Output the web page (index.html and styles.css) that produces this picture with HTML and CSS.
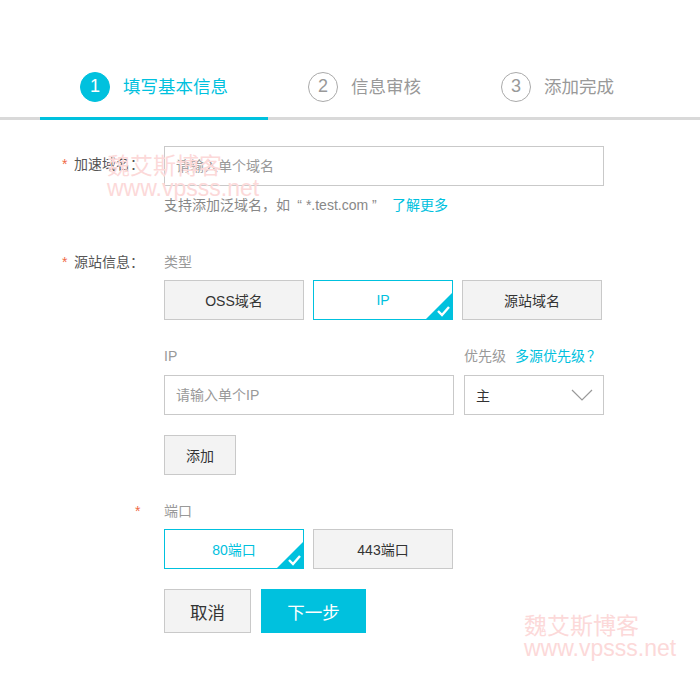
FILE: index.html
```html
<!DOCTYPE html>
<html lang="zh-CN">
<head>
  <meta charset="UTF-8">
  <meta name="viewport" content="width=device-width, initial-scale=1.0">
  <title>添加域名</title>
  <link rel="stylesheet" href="styles.css">
</head>
<body>
  <div class="page">
    <ul class="steps">
      <li class="step active"><span class="step-num">1</span><span class="step-name">填写基本信息</span></li>
      <li class="step"><span class="step-num">2</span><span class="step-name">信息审核</span></li>
      <li class="step"><span class="step-num">3</span><span class="step-name">添加完成</span></li>
    </ul>

    <form class="form">
      <div class="form-row">
        <label class="form-label label-input"><span class="req">*</span>加速域名：</label>
        <div class="form-field">
          <input type="text" class="text-input domain-input" placeholder="请输入单个域名">
          <p class="help">支持添加泛域名，如<span class="q q-open">“</span> *.test.com <span class="q q-close">”</span><a class="link" href="#">了解更多</a></p>
        </div>
      </div>

      <div class="form-row row-origin">
        <label class="form-label"><span class="req">*</span>源站信息：</label>
        <div class="form-field">
          <div class="field-title">类型</div>
          <div class="choice-group">
            <button type="button" class="choice">OSS域名</button>
            <button type="button" class="choice selected">IP
              <svg class="choice-mark" width="26" height="26" viewBox="0 0 26 26">
                <polygon points="26,0 26,26 0,26" fill="#00c1de"/>
                <polyline points="12,18 16,22 23,14" fill="none" stroke="#fff" stroke-width="2.4"/>
              </svg>
            </button>
            <button type="button" class="choice">源站域名</button>
          </div>

          <div class="ip-row">
            <div class="ip-col">
              <div class="field-title sub">IP</div>
              <input type="text" class="text-input ip-input" placeholder="请输入单个IP">
            </div>
            <div class="prio-col">
              <div class="field-title sub prio-title">优先级<a class="link prio-link" href="#">多源优先级<span class="qm">？</span></a></div>
              <div class="select">
                <span>主</span>
                <svg width="22" height="12" viewBox="0 0 22 12">
                  <polyline points="1,1 11,11 21,1" fill="none" stroke="#999" stroke-width="1.2"/>
                </svg>
              </div>
            </div>
          </div>

          <button type="button" class="button add-btn">添加</button>
        </div>
      </div>

      <div class="form-row row-port">
        <label class="form-label port-label"><span class="req">*</span></label>
        <div class="form-field">
          <div class="field-title">端口</div>
          <div class="choice-group">
            <button type="button" class="choice selected">80端口
              <svg class="choice-mark" width="26" height="26" viewBox="0 0 26 26">
                <polygon points="26,0 26,26 0,26" fill="#00c1de"/>
                <polyline points="12,18 16,22 23,14" fill="none" stroke="#fff" stroke-width="2.4"/>
              </svg>
            </button>
            <button type="button" class="choice">443端口</button>
          </div>
          <div class="actions">
            <button type="button" class="button big cancel">取消</button>
            <button type="submit" class="button big primary">下一步</button>
          </div>
        </div>
      </div>
    </form>

    <div class="watermark wm-top">魏艾斯博客<br>www.vpsss.net</div>
    <div class="watermark wm-bottom">魏艾斯博客<br>www.vpsss.net</div>
  </div>
</body>
</html>
```

FILE: styles.css
```css
body {
  margin: 0;
  background: #fff;
  color: #333;
  font-family: "Liberation Sans", "Noto Sans CJK SC", sans-serif;
  font-size: 14px;
}

.page {
  position: relative;
  width: 700px;
  height: 678px;
  overflow: hidden;
}

/* steps */
.steps {
  display: flex;
  margin: 56px 0 0;
  padding: 0 0 0 40px;
  list-style: none;
  border-bottom: 3px solid #d9d9d9;
}

.step {
  display: flex;
  align-items: center;
  gap: 13px;
  height: 64px;
  padding: 0 40px;
  margin-bottom: -3px;
  border-bottom: 3px solid transparent;
  box-sizing: border-box;
  color: #999;
}

.step.active {
  border-bottom-color: #00c1de;
  color: #00c1de;
}

.step-num {
  width: 30px;
  height: 30px;
  border: 1px solid #aaa;
  border-radius: 50%;
  box-sizing: border-box;
  display: flex;
  align-items: center;
  justify-content: center;
  font-size: 18px;
  color: #999;
}

.step.active .step-num {
  background: #00c1de;
  border-color: #00c1de;
  color: #fff;
}

.step-name {
  font-size: 17.5px;
  line-height: 24px;
}

/* form */
.form {
  padding-top: 26px;
}

.form-row {
  display: flex;
  align-items: flex-start;
}

.row-origin {
  margin-top: 37px;
}

.row-port {
  margin-top: 26px;
}

.form-label {
  width: 102px;
  padding-left: 62px;
  line-height: 20px;
  color: #555;
  flex-shrink: 0;
}

.form-label.label-input {
  padding-top: 8px;
}

.form-label.port-label {
  width: 29px;
  padding-left: 135px;
}

.req {
  display: inline-block;
  width: 12px;
  color: #f06a46;
}

.form-field {
  width: 440px;
}

.text-input {
  display: block;
  height: 40px;
  padding: 0 11px;
  border: 1px solid #c9c9c9;
  border-radius: 0;
  box-sizing: border-box;
  font-family: inherit;
  font-size: 14px;
  color: #333;
  outline: none;
}

.text-input::placeholder {
  color: #999;
}

.domain-input {
  width: 440px;
}

.help {
  margin: 9px 0 0;
  line-height: 20px;
  color: #888;
}

.q {
  display: inline-block;
  width: 12px;
}

.q-open {
  text-align: right;
}

.q-close {
  width: 20px;
}

.link {
  color: #00c1de;
  text-decoration: none;
}

.prio-link {
  margin-left: 9px;
}

.qm {
  display: inline-block;
  width: 16px;
  text-align: right;
}

.field-title {
  line-height: 20px;
  color: #999;
  margin-bottom: 8px;
}

.field-title.sub {
  margin-bottom: 9px;
}

/* choice buttons */
.choice-group {
  display: flex;
  gap: 9px;
}

.choice {
  position: relative;
  width: 140px;
  height: 40px;
  padding: 0;
  border: 1px solid #c9c9c9;
  background: #f3f3f3;
  color: #333;
  font-family: inherit;
  font-size: 14px;
  overflow: hidden;
  cursor: pointer;
}

.choice.selected {
  background: #fff;
  border-color: #00c1de;
  color: #00c1de;
}

.choice-mark {
  position: absolute;
  right: 0;
  bottom: 0;
}

/* ip row */
.ip-row {
  display: flex;
  gap: 10px;
  margin-top: 26px;
}

.ip-input {
  width: 290px;
}

.prio-col {
  width: 140px;
}

.prio-title {
  white-space: nowrap;
}

.select {
  display: flex;
  align-items: center;
  justify-content: space-between;
  height: 40px;
  padding: 0 10px 0 11px;
  border: 1px solid #c9c9c9;
  box-sizing: border-box;
  color: #333;
}

/* buttons */
.button {
  height: 40px;
  padding: 0;
  border: 1px solid #c9c9c9;
  background: #f3f3f3;
  color: #333;
  font-family: inherit;
  font-size: 14px;
  cursor: pointer;
}

.add-btn {
  display: block;
  width: 72px;
  margin-top: 20px;
}

.actions {
  display: flex;
  gap: 10px;
  margin-top: 20px;
}

.button.big {
  height: 44px;
  font-size: 17.5px;
}

.button.cancel {
  width: 87px;
}

.button.primary {
  width: 105px;
  background: #00c1de;
  border-color: #00c1de;
  color: #fff;
}

/* watermark */
.watermark {
  position: absolute;
  color: #fcd9d9;
  font-size: 23px;
  line-height: 22px;
  pointer-events: none;
  white-space: nowrap;
}

.wm-top {
  left: 107px;
  top: 155px;
}

.wm-bottom {
  left: 524px;
  top: 615px;
}
```
